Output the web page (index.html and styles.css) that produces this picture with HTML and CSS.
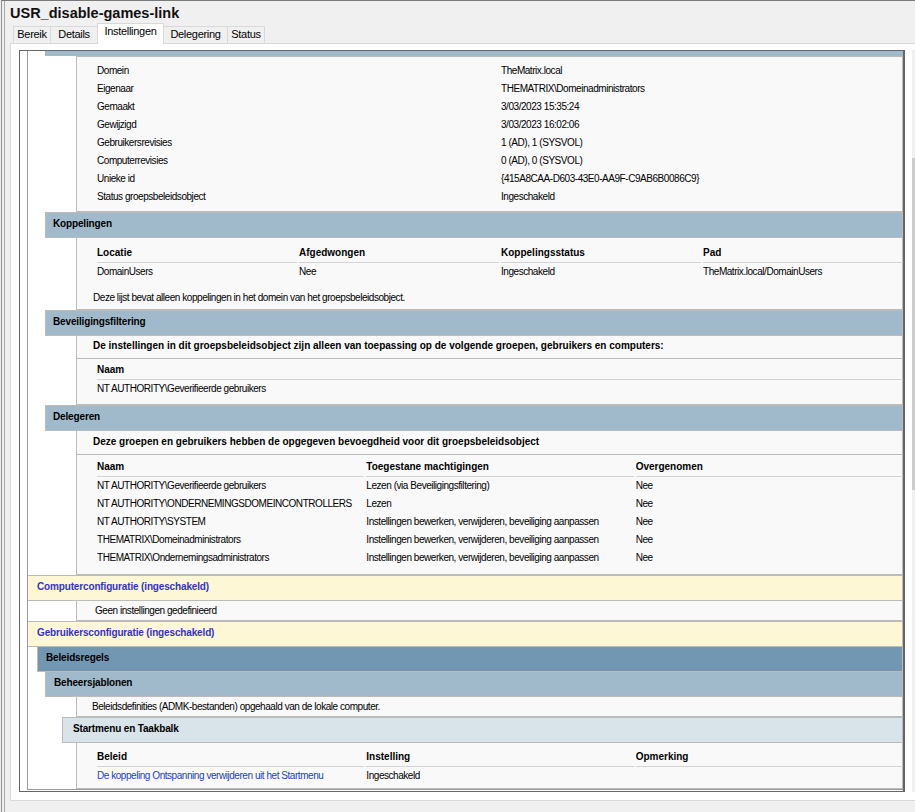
FILE: index.html
```html
<!DOCTYPE html>
<html lang="nl">
<head>
<meta charset="utf-8">
<title>USR_disable-games-link</title>
<link rel="stylesheet" href="styles.css">
</head>
<body>
<div class="window">
  <div class="window-inner">
    <h1 class="title">USR_disable-games-link</h1>
    <div class="tabs">
      <div class="tab tab-bereik">Bereik</div>
      <div class="tab tab-details">Details</div>
      <div class="tab tab-inst active">Instellingen</div>
      <div class="tab tab-deleg">Delegering</div>
      <div class="tab tab-status">Status</div>
    </div>
    <div class="panel">
      <div class="report-row">
        <div class="report">
          <div class="gpo">
            <div class="strip"></div>
            <div class="box box-details">
              <table class="grid">
                <tr><td>Domein</td><td>TheMatrix.local</td></tr>
                <tr><td>Eigenaar</td><td>THEMATRIX\Domeinadministrators</td></tr>
                <tr><td>Gemaakt</td><td>3/03/2023 15:35:24</td></tr>
                <tr><td>Gewijzigd</td><td>3/03/2023 16:02:06</td></tr>
                <tr><td>Gebruikersrevisies</td><td>1 (AD), 1 (SYSVOL)</td></tr>
                <tr><td>Computerrevisies</td><td>0 (AD), 0 (SYSVOL)</td></tr>
                <tr><td>Unieke id</td><td>{415A8CAA-D603-43E0-AA9F-C9AB6B0086C9}</td></tr>
                <tr><td>Status groepsbeleidsobject</td><td>Ingeschakeld</td></tr>
              </table>
            </div>

            <div class="hd he1">Koppelingen</div>
            <div class="box box-links">
              <table class="grid">
                <tr><th>Locatie</th><th>Afgedwongen</th><th>Koppelingsstatus</th><th>Pad</th></tr>
                <tr><td>DomainUsers</td><td>Nee</td><td>Ingeschakeld</td><td>TheMatrix.local/DomainUsers</td></tr>
              </table>
              <div class="note">Deze lijst bevat alleen koppelingen in het domein van het groepsbeleidsobject.</div>
            </div>

            <div class="hd he1">Beveiligingsfiltering</div>
            <div class="box intro intro-filter">De instellingen in dit groepsbeleidsobject zijn alleen van toepassing op de volgende groepen, gebruikers en computers:</div>
            <div class="box sub sub-filter">
              <table class="grid">
                <tr><th>Naam</th></tr>
                <tr><td>NT AUTHORITY\Geverifieerde gebruikers</td></tr>
              </table>
            </div>

            <div class="hd he1">Delegeren</div>
            <div class="box intro intro-deleg">Deze groepen en gebruikers hebben de opgegeven bevoegdheid voor dit groepsbeleidsobject</div>
            <div class="box sub sub-deleg">
              <table class="grid">
                <tr><th>Naam</th><th>Toegestane machtigingen</th><th>Overgenomen</th></tr>
                <tr><td>NT AUTHORITY\Geverifieerde gebruikers</td><td>Lezen (via Beveiligingsfiltering)</td><td>Nee</td></tr>
                <tr><td>NT AUTHORITY\ONDERNEMINGSDOMEINCONTROLLERS</td><td>Lezen</td><td>Nee</td></tr>
                <tr><td>NT AUTHORITY\SYSTEM</td><td>Instellingen bewerken, verwijderen, beveiliging aanpassen</td><td>Nee</td></tr>
                <tr><td>THEMATRIX\Domeinadministrators</td><td>Instellingen bewerken, verwijderen, beveiliging aanpassen</td><td>Nee</td></tr>
                <tr><td>THEMATRIX\Ondernemingsadministrators</td><td>Instellingen bewerken, verwijderen, beveiliging aanpassen</td><td>Nee</td></tr>
              </table>
            </div>

            <div class="hd he0">Computerconfiguratie (ingeschakeld)</div>
            <div class="box plain plain-none">Geen instellingen gedefinieerd</div>

            <div class="hd he0">Gebruikersconfiguratie (ingeschakeld)</div>
            <div class="hd he1h">Beleidsregels</div>
            <div class="hd he2">Beheersjablonen</div>
            <div class="box plain plain-admx">Beleidsdefinities (ADMK-bestanden) opgehaald van de lokale computer.</div>
            <div class="hd he3">Startmenu en Taakbalk</div>
            <div class="box box-policy">
              <table class="grid">
                <tr><th>Beleid</th><th>Instelling</th><th>Opmerking</th></tr>
                <tr><td><span class="explainlink">De koppeling Ontspanning verwijderen uit het Startmenu</span></td><td>Ingeschakeld</td><td></td></tr>
              </table>
            </div>
          </div>
        </div>
        <div class="vscroll"><div class="thumb"></div></div>
      </div>
    </div>
  </div>
</div>
</body>
</html>
```
FILE: styles.css
```css
html, body {
  margin: 0;
  padding: 0;
  overflow: hidden;
}

body {
  width: 915px;
  height: 812px;
  background: #f0f0f0;
  font-family: "Liberation Sans", Arial, sans-serif;
  color: #000;
}

.window {
  height: 811px;
  margin-left: 1px;
  border-top: 1px solid #7a7a7a;
  border-left: 1px solid #8f8f8f;
}

.window-inner {
  height: 100%;
  margin-left: 2px;
  border-left: 1px solid #a8a8a8;
}

.title {
  margin: 0;
  padding: 4px 0 0 5px;
  font-size: 14.5px;
  line-height: 17px;
  font-weight: bold;
  color: #111;
}

/* ---------- tabs ---------- */
.tabs {
  display: flex;
  align-items: flex-end;
  height: 20px;
  margin-top: 1px;
  padding-left: 8px;
}

.tab {
  box-sizing: border-box;
  height: 17px;
  border-top: 1px solid #d9d9d9;
  border-left: 1px solid #d9d9d9;
  background: #f0f0f0;
  font-size: 11px;
  line-height: 15px;
  letter-spacing: -0.3px;
  text-align: center;
  white-space: nowrap;
}

.tab-bereik { width: 37px; }
.tab-details { width: 47px; }
.tab-inst { width: 67px; }
.tab-deleg { width: 63px; }
.tab-status { width: 38px; border-right: 1px solid #d9d9d9; }

.tab.active {
  position: relative;
  z-index: 1;
  height: 21px;
  margin-bottom: -1px;
  border-right: 1px solid #d9d9d9;
  background: #fff;
}

.tab.active + .tab { border-left: none; }

/* ---------- panel ---------- */
.panel {
  box-sizing: border-box;
  width: 930px;
  height: 758px;
  margin-left: 5px;
  border: 1px solid #d9d9d9;
  background: #fff;
}

.report-row {
  display: flex;
  gap: 7px;
  margin: 6px 0 0 8px;
}

.report {
  box-sizing: border-box;
  width: 886px;
  height: 742px;
  border: 1px solid #666;
  border-right-width: 2px;
  background: #fff;
  overflow: hidden;
}

.vscroll {
  width: 17px;
  background: #f0f0f0;
}

.thumb {
  margin-top: 108px;
  height: 332px;
  background: #cdcdcd;
}

/* ---------- report content ---------- */
.gpo {
  margin-left: 7px;
  border-left: 1px solid #999;
  border-bottom: 1px solid #999;
}

.strip {
  height: 5px;
  margin-left: 17px;
  background: #a0bacb;
}

.hd {
  box-sizing: border-box;
  height: 26px;
  margin-bottom: -1px;
  border: 1px solid #bbb;
  padding-top: 4px;
  font-size: 10px;
  line-height: 14px;
  font-weight: bold;
  letter-spacing: -0.15px;
  white-space: nowrap;
}

.he0 {
  border-left: none;
  padding-left: 9px;
  background: #fef7d6;
  color: #3333cc;
}

.he1 {
  margin-left: 17px;
  padding-left: 7px;
  background: #a0bacb;
}

.he1h {
  margin-left: 9px;
  padding-left: 8px;
  background: #7197b3;
}

.he2 {
  margin-left: 17px;
  padding-left: 8px;
  background: #a0bacb;
}

.he3 {
  margin-left: 34px;
  padding-left: 10px;
  background: #d9e3ea;
}

.box {
  margin-left: 48px;
  border: 1px solid #bbb;
  padding-left: 16px;
  background: #f9f9f9;
  font-size: 10px;
  line-height: 18px;
  letter-spacing: -0.45px;
  white-space: nowrap;
}

.box-details { padding-top: 5px; padding-bottom: 5px; }
.box-links { padding-top: 6px; padding-bottom: 2px; }
.box-policy { padding-top: 5px; padding-bottom: 3px; }

.note { margin-top: 8px; }

.intro {
  font-weight: bold;
  letter-spacing: 0;
}

.intro-filter { padding-top: 1px; padding-bottom: 3px; }
.intro-deleg { padding-top: 2px; padding-bottom: 3px; }

.sub { border-top: none; }
.sub-filter { padding-top: 2px; padding-bottom: 6px; }
.sub-deleg { padding-top: 3px; padding-bottom: 7px; }

.plain { padding-top: 1px; }
.plain-none { padding-left: 18px; }
.plain-admx { padding-left: 15px; }

.grid {
  width: 810px;
  margin-left: 2px;
  border-collapse: separate;
  border-spacing: 2px 0;
  table-layout: fixed;
  font-size: 10px;
}

.grid th,
.grid td {
  padding: 0;
  text-align: left;
  vertical-align: top;
  line-height: 18px;
  white-space: nowrap;
  overflow: hidden;
}

.grid th {
  font-weight: bold;
  letter-spacing: 0;
  border-bottom: 1px solid #d4d4d4;
}

.grid td {
  letter-spacing: -0.45px;
}

.explainlink {
  color: #2040cc;
}
```
